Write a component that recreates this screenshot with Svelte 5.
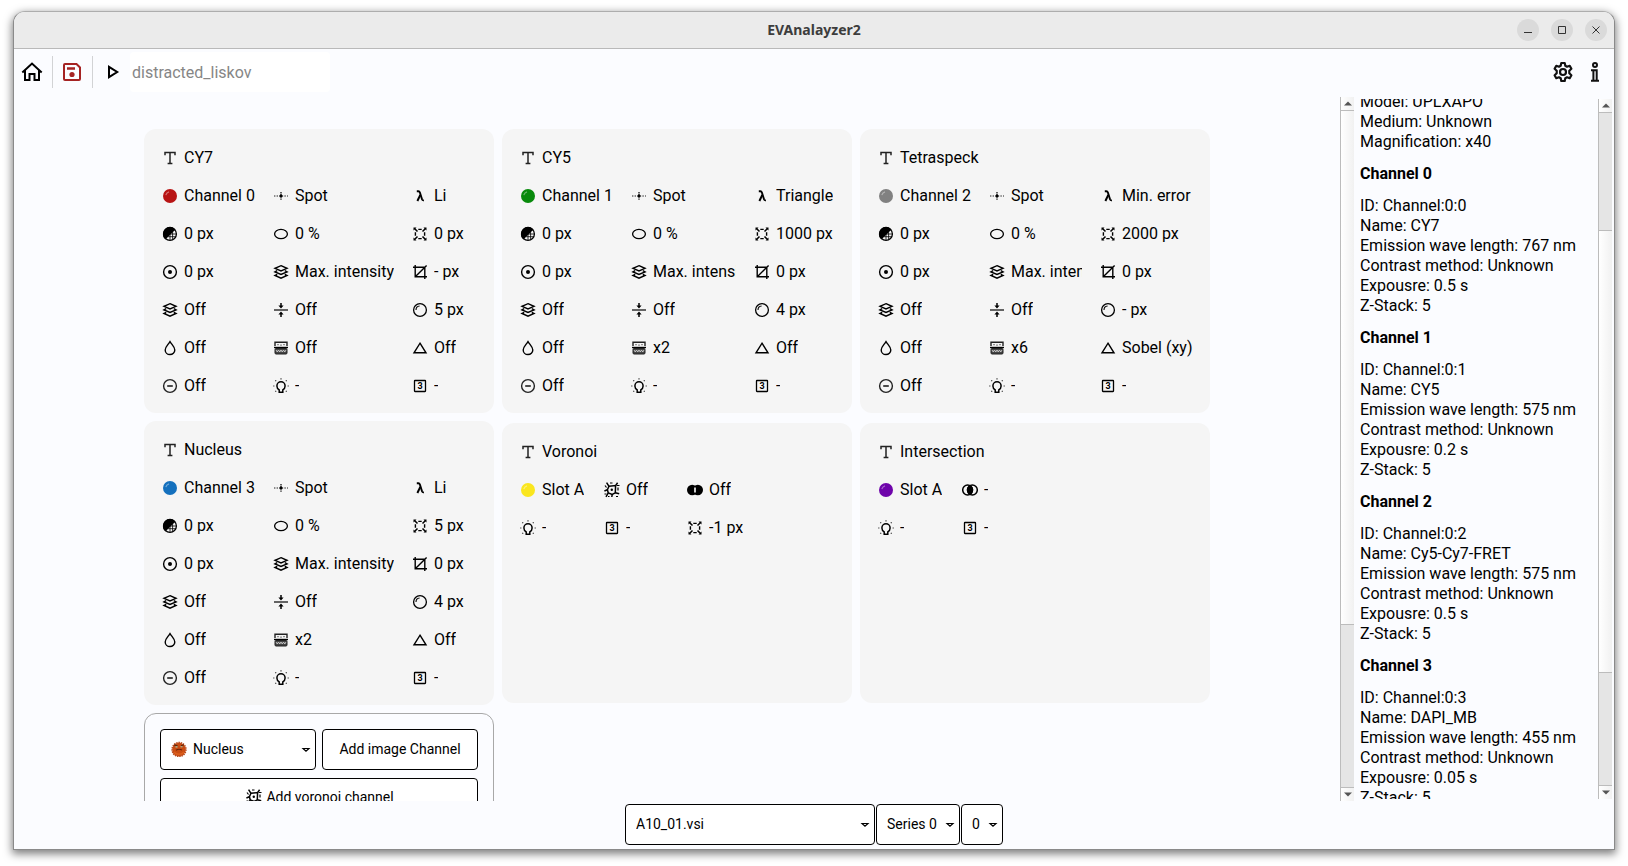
<script>
  let projectName = $state('distracted_liskov');

  const cell = (icon, text, color) => ({ icon, text, color });

  function imageChannel(title, color, channel, cols, v) {
    return {
      title,
      cols,
      tall: true,
      cells: [
        cell('ball', channel, color), cell('spot', 'Spot'), cell('lambda', v.threshold),
        cell('contrast', '0 px'), cell('ellipse', '0 %'), cell('size', v.size),
        cell('target', '0 px'), cell('layers', 'Max. intensity'), cell('crop', v.snap),
        cell('layers', 'Off'), cell('compress', 'Off'), cell('circle', v.rolling),
        cell('drop', 'Off'), cell('noise', v.median), cell('triangle', v.edge),
        cell('minus', 'Off'), cell('bulb', '-'), cell('three', '-')
      ]
    };
  }

  const cards = [
    imageChannel('CY7', '#b81414', 'Channel 0', '95px 123px 1fr', { threshold: 'Li', size: '0 px', snap: '- px', rolling: '5 px', median: 'Off', edge: 'Off' }),
    imageChannel('CY5', '#088a0c', 'Channel 1', '95px 107px 1fr', { threshold: 'Triangle', size: '1000 px', snap: '0 px', rolling: '4 px', median: 'x2', edge: 'Off' }),
    imageChannel('Tetraspeck', '#818181', 'Channel 2', '95px 95px 1fr', { threshold: 'Min. error', size: '2000 px', snap: '0 px', rolling: '- px', median: 'x6', edge: 'Sobel (xy)' }),
    imageChannel('Nucleus', '#1470bd', 'Channel 3', '95px 123px 1fr', { threshold: 'Li', size: '5 px', snap: '0 px', rolling: '4 px', median: 'x2', edge: 'Off' }),
    {
      title: 'Voronoi', cols: '68px 67px 1fr',
      cells: [
        cell('ball', 'Slot A', '#fae61e'), cell('voronoi', 'Off'), cell('mask', 'Off'),
        cell('bulb', '-'), cell('three', '-'), cell('size', '-1 px')
      ]
    },
    {
      title: 'Intersection', cols: '68px 67px 1fr',
      cells: [
        cell('ball', 'Slot A', '#6e04aa'), cell('intersect', '-'), null,
        cell('bulb', '-'), cell('three', '-')
      ]
    }
  ];

  const metadata = [
    { id: 0, name: 'CY7', wave: 767, exposure: '0.5' },
    { id: 1, name: 'CY5', wave: 575, exposure: '0.2' },
    { id: 2, name: 'Cy5-Cy7-FRET', wave: 575, exposure: '0.5' },
    { id: 3, name: 'DAPI_MB', wave: 455, exposure: '0.05' }
  ];
</script>

{#snippet icon(name, color)}
  <svg class="icon" viewBox="0 0 16 16" fill="none" stroke="#000" stroke-width="1.3" aria-hidden="true">
    {#if name === 'title'}
      <path d="M3 5.200V2.500h10v2.700M8 2.500v11M5.600 13.500h4.800" stroke="#222" stroke-width="1.500" />
    {:else if name === 'ball'}
      <circle cx="8" cy="8" r="7" fill={color} stroke="none" />
      <path d="M3.800 7.200A4.600 4.600 0 0 1 7 3.800" stroke="#fff" stroke-opacity=".4" stroke-width="1.200" />
    {:else if name === 'spot'}
      <path d="M1 8h14" stroke-dasharray="1.400 1.200" stroke="#222" stroke-width="1.200" />
      <path d="M8 4v8" stroke-dasharray="1.200 .6" stroke-width="1.200" />
      <circle cx="8" cy="8" r="1.500" fill="#000" stroke="none" />
    {:else if name === 'lambda'}
      <path d="M4.800 3.200h1.600c.9 0 1.200.4 1.500 1.300l2.200 7c.3.8.8 1 1.800.8" stroke-width="1.900" />
      <path d="M8.300 6.800 5.400 13" stroke-width="2" />
    {:else if name === 'contrast'}
      <circle cx="8" cy="8" r="6.400" />
      <path d="M3.400 12.600A6.400 6.400 0 0 1 12.600 3.400z" fill="#000" />
      <path d="M8 8v6M10.600 5.400v8M5.400 10.700h8M8 8h6.200" stroke-width=".8" />
    {:else if name === 'ellipse'}
      <ellipse cx="8" cy="8" rx="6.400" ry="4.700" />
    {:else if name === 'size'}
      <path d="M6.300 3.400h3.400M6.300 12.600h3.400M3.400 6.300v3.400M12.600 6.300v3.400" stroke-width="1.400" />
      <path d="M2.500 2.500l3 3M13.500 2.500l-3 3M2.500 13.500l3-3M13.500 13.500l-3-3" stroke-width="1.500" />
      <path d="M1.500 4.500v-3h3zM11.500 1.500h3v3zM1.500 11.500v3h3zM14.500 11.500v3h-3z" fill="#000" stroke="none" />
    {:else if name === 'target'}
      <circle cx="8" cy="8" r="6.400" stroke-width="1.400" />
      <circle cx="8" cy="8" r="2" fill="#000" stroke="none" />
    {:else if name === 'layers'}
      <path d="M8 1.700 14 4.300 8 6.900 2 4.300z" stroke-width="1.400" />
      <path d="M4.200 6.700 2 7.900l6 2.600 6-2.600-2.200-1.200M4.200 10.300 2 11.500l6 2.600 6-2.600-2.200-1.200" stroke-width="1.500" />
    {:else if name === 'crop'}
      <path d="M3.200 1v11.800H15M1 3.200h11.800V15M4 12 14.600 1.400" stroke-width="1.400" />
    {:else if name === 'compress'}
      <path d="M1 8h14" stroke="#333" stroke-width="1.500" />
      <path d="M8 1v3M8 15v-3" stroke-width="1.500" />
      <path d="M5.400 3.600h5.200L8 6.400zM5.400 12.400h5.200L8 9.600z" fill="#000" stroke="none" />
    {:else if name === 'circle'}
      <circle cx="8" cy="8" r="6.400" />
      <path d="M4 8a4 4 0 0 1 3.600-4" stroke-width="1.100" />
    {:else if name === 'drop'}
      <path d="M8 1.600C6.200 4.600 3.200 6.900 3.200 9.900a4.800 4.600 0 0 0 9.600 0C12.800 6.900 9.800 4.600 8 1.600z" stroke-width="1.400" />
    {:else if name === 'noise'}
      <path d="M2 6V2.200h12V6" stroke="#222" stroke-width="1.400" />
      <path d="M1 7.500h14" stroke-width="1.400" />
      <path d="M4.500 4.700h1M7.500 5.200h1M10.500 4.700h1" stroke="#333" />
      <rect x="2" y="8.500" width="12" height="5.500" rx="1" fill="#444" stroke="#222" stroke-width="1" />
      <path d="M3 10l1.250 2L5.500 10l1.250 2L8 10l1.250 2 1.250-2 1.250 2L13 10" stroke="#ddd" stroke-width=".8" />
    {:else if name === 'triangle'}
      <path d="M8 3.200 14 12.800H2z" stroke-width="1.400" />
    {:else if name === 'minus'}
      <circle cx="8" cy="8" r="6.400" stroke="#222" stroke-width="1.400" />
      <path d="M5.200 8h5.600" stroke-width="1.400" />
    {:else if name === 'bulb'}
      <path d="M6.200 14.200v-2.300C5 11.100 3.900 9.900 3.900 7.900a4.100 4.100 0 0 1 8.200 0c0 2-1.100 3.200-2.300 4v2.300z" stroke-width="1.500" />
      <path d="M8 .2v1.300M2.300 2.300l.9.9M13.700 2.300l-.9.900M.2 8h1.200M15.800 8h-1.200M2.300 13.700l.9-.9M13.700 13.700l-.9-.9" stroke="#333" stroke-width="1.200" />
    {:else if name === 'three'}
      <rect x="2.500" y="2.500" width="11" height="11" rx=".5" />
      <text x="8" y="11.300" text-anchor="middle" font-family="Roboto, sans-serif" font-weight="700" font-size="9" fill="#000" stroke="none">3</text>
    {:else if name === 'voronoi'}
      <path d="M5 4.300 11.600 3.600 11.300 10.800 8.200 12.500 4.300 10.900 3.400 7.800z" stroke-width="1.500" />
      <path d="M5 4.300 2.600.6M11.600 3.600 13.600.8M11.300 10.800l3.900 1M8.200 12.500 7.800 15M4.300 10.900l-2.300 4M3.400 7.800.4 9" stroke-width="1.500" />
      <path d="M6 1h2.500M1 3.500l1.500 2M13 3.500h2.500M14 5.500v3M12 14.500h2M.5 12h2M4 14.500h1.500" stroke-width="1.200" />
      <circle cx="7.800" cy="7.700" r="1.200" fill="#000" stroke="none" />
    {:else if name === 'mask'}
      <circle cx="5.200" cy="8" r="5.200" fill="#000" stroke="none" />
      <circle cx="10.800" cy="8" r="5.200" fill="#000" stroke="none" />
      <path d="M8 5.500v5" stroke="#fff" stroke-width="1.600" />
    {:else if name === 'intersect'}
      <circle cx="5.600" cy="8" r="4.900" stroke-width="1.500" />
      <circle cx="10.400" cy="8" r="4.900" stroke-width="1.500" />
      <path d="M8 3.700a4.900 4.900 0 0 1 0 8.600 4.900 4.900 0 0 1 0-8.600z" fill="#000" />
    {/if}
  </svg>
{/snippet}

{#snippet arrow()}
  <svg class="arrow" viewBox="0 0 10 8" aria-hidden="true">
    <path d="M2 2.500h6L5 5.300z" fill="none" stroke="#000" stroke-width="1.200" />
  </svg>
{/snippet}

{#snippet scrollbar(before, thumb, after)}
  <div class="scrollbar" aria-hidden="true">
    <div class="step"><svg viewBox="0 0 8 5"><path d="M0 4.500h8L4 .5z" fill="#555" /></svg></div>
    <div class="trough" style="flex-grow: {before}"></div>
    <div class="thumb" style="flex-grow: {thumb}"></div>
    <div class="trough" style="flex-grow: {after}"></div>
    <div class="step"><svg viewBox="0 0 8 5"><path d="M0 .5h8L4 4.500z" fill="#555" /></svg></div>
  </div>
{/snippet}

<div class="desktop">
  <div class="window">
    <header class="titlebar">
      <h1>EVAnalayzer2</h1>
      <div class="window-buttons">
        <button aria-label="Minimize"><svg viewBox="0 0 12 12"><path d="M2 8.500h8" /></svg></button>
        <button aria-label="Maximize"><svg viewBox="0 0 12 12"><path d="M2.500 2.500h7v7h-7z" /></svg></button>
        <button aria-label="Close"><svg viewBox="0 0 12 12"><path d="M2.500 2.500l7 7M9.500 2.500l-7 7" /></svg></button>
      </div>
    </header>

    <nav class="toolbar">
      <button class="tool" aria-label="Home">
        <svg viewBox="0 0 24 24" fill="none" stroke="#000" stroke-width="2"><path d="M2.300 12.400 12 3.600l9.700 8.800M5 10.500V20h4.500v-6h5v6H19v-9.500" /></svg>
      </button>
      <span class="divider"></span>
      <button class="tool" aria-label="Save">
        <svg viewBox="0 0 24 24" fill="none" stroke="#a52323" stroke-width="2"><path d="M5 4h11.500L20 7.500V19a1 1 0 0 1-1 1H5a1 1 0 0 1-1-1V5a1 1 0 0 1 1-1z" /><path d="M7 8.500h8" stroke-width="2.600" /><circle cx="12" cy="14.500" r="2.600" fill="#a52323" stroke="none" /></svg>
      </button>
      <span class="divider"></span>
      <button class="tool run" aria-label="Run">
        <svg viewBox="0 0 24 24" fill="none" stroke="#000" stroke-width="2"><path d="M8 6.800v10.400L16.200 12z" /></svg>
      </button>
      <input class="project" type="text" aria-label="Project name" bind:value={projectName} />
      <span class="spacer"></span>
      <button class="tool" aria-label="Settings">
        <svg viewBox="0 0 24 24" fill="none" stroke="#111" stroke-width="2.200" stroke-linejoin="round"><path d="M10.300 3h3.400l.6 2.700 1.700 1 2.700-.9 1.700 3-2.100 1.900v2.600l2.100 1.900-1.700 3-2.700-.9-1.700 1-.6 2.700h-3.400l-.6-2.700-1.700-1-2.700.9-1.700-3 2.100-1.900v-2.600L3.600 8.800l1.700-3 2.700.9 1.700-1z" /><circle cx="12" cy="12" r="3" /></svg>
      </button>
      <button class="tool" aria-label="Information">
        <svg viewBox="0 0 24 24" fill="none" stroke="#111" stroke-width="2"><circle cx="12" cy="5" r="2" /><path d="M8 10.300h5.700v10.200M8 20.800h8M10.400 10.500v10" stroke-width="2" /></svg>
      </button>
    </nav>

    <div class="body">
      <main>
        <div class="scroll">
          <div class="cards">
            {#each cards as card}
              <section class="card" class:short={!card.tall}>
                <h2>{@render icon('title')}<span>{card.title}</span></h2>
                <div class="values" style="grid-template-columns: {card.cols}">
                  {#each card.cells as c}
                    {#if c}
                      <div class="value">{@render icon(c.icon, c.color)}<span>{c.text}</span></div>
                    {:else}
                      <div></div>
                    {/if}
                  {/each}
                </div>
              </section>
            {/each}
            <form class="add" onsubmit={(e) => e.preventDefault()}>
              <div class="dropdown kind">
                <svg class="fuzzy" viewBox="0 0 16 16" aria-hidden="true">
                  <circle cx="8" cy="8.500" r="6.800" fill="#c94c12" />
                  <circle cx="8" cy="8.500" r="7" fill="none" stroke="#b8481a" stroke-width="1.400" stroke-dasharray="1.500 .8" />
                  <path d="M3 11a6 5 0 0 0 10 0" fill="none" stroke="#dd5f1c" stroke-width="1.500" />
                  <path d="M3 3.800l3.500 1M10 4.800l3-1" stroke="#5a250b" stroke-width="1.200" />
                  <ellipse cx="5.500" cy="5.900" rx="1.300" ry=".8" fill="#a9ab86" /><ellipse cx="10.500" cy="5.700" rx="1.300" ry=".8" fill="#a9ab86" />
                  <path d="M5 9.300c1.500-1.200 4-1.300 6-.2" fill="none" stroke="#6a2508" stroke-width="1.100" />
                </svg>
                <select aria-label="Channel type"><option>Nucleus</option></select>
                {@render arrow()}
              </div>
              <button>Add image Channel</button>
              <button class="wide">{@render icon('voronoi')}<span>Add voronoi channel</span></button>
            </form>
          </div>
        </div>
        {@render scrollbar(0, 514, 162)}
      </main>

      <aside>
        <div class="meta">
          <p>Model: UPLXAPO</p>
          <p>Medium: Unknown</p>
          <p>Magnification: x40</p>
          {#each metadata as m}
            <h3>Channel {m.id}</h3>
            <p>ID: Channel:0:{m.id}</p>
            <p>Name: {m.name}</p>
            <p>Emission wave length: {m.wave} nm</p>
            <p>Contrast method: Unknown</p>
            <p>Expousre: {m.exposure} s</p>
            <p>Z-Stack: 5</p>
          {/each}
        </div>
        {@render scrollbar(118, 443, 112)}
      </aside>
    </div>

    <footer>
      <div class="dropdown file">
        <select aria-label="Image file"><option>A10_01.vsi</option></select>
        {@render arrow()}
      </div>
      <div class="dropdown series">
        <select aria-label="Series"><option>Series 0</option></select>
        {@render arrow()}
      </div>
      <div class="dropdown plane">
        <select aria-label="Plane"><option>0</option></select>
        {@render arrow()}
      </div>
    </footer>
  </div>
</div>

<style>
  :global(body) {
    margin: 0;
    background: #fff;
  }
  .desktop {
    box-sizing: border-box;
    height: 100vh;
    padding: 11px 13px 16px;
    font: 16px/20px Roboto, sans-serif;
    color: #000;
  }
  .window {
    box-sizing: border-box;
    height: 100%;
    display: flex;
    flex-direction: column;
    border: 1px solid #8a8a8a;
    border-top-color: #adadad;
    border-radius: 12px 12px 0 0;
    background: #fbfcff;
    box-shadow: 0 3px 9px 1px rgba(0, 0, 0, 0.5);
    overflow: hidden;
  }
  .titlebar {
    display: grid;
    grid-template-columns: 1fr auto 1fr;
    align-items: center;
    height: 36px;
    border-bottom: 1px solid #b9b9b9;
    background: #ebebeb;
  }
  h1 {
    grid-column: 2;
    margin: 0;
    font: 700 14px/20px "Noto Sans", sans-serif;
    color: #3d3d3d;
  }
  .window-buttons {
    display: flex;
    justify-content: flex-end;
    gap: 12px;
    padding-right: 7px;
  }
  .window-buttons button {
    display: grid;
    place-items: center;
    width: 22px;
    height: 22px;
    padding: 0;
    border: 0;
    border-radius: 50%;
    background: #dadada;
  }
  .window-buttons svg {
    width: 12px;
    height: 12px;
    fill: none;
    stroke: #333;
    stroke-width: 1;
  }
  .toolbar {
    box-sizing: border-box;
    display: flex;
    align-items: center;
    height: 48px;
    padding: 0 3px 2px 2px;
    flex: none;
  }
  .tool {
    display: grid;
    place-items: center;
    width: 32px;
    height: 40px;
    padding: 0;
    border: 0;
    background: none;
  }
  .tool svg {
    width: 24px;
    height: 24px;
  }
  .run {
    width: 34px;
  }
  .divider {
    width: 1px;
    height: 32px;
    margin: 0 3px 0 4px;
    background: #d2d3d5;
  }
  .project {
    box-sizing: border-box;
    width: 200px;
    height: 40px;
    padding: 0 2px;
    border: 0;
    border-radius: 4px;
    background: #fff;
    font: inherit;
    color: #868686;
  }
  .spacer {
    flex: 1;
  }
  .body {
    display: flex;
    flex: 1;
    min-height: 0;
  }
  main {
    display: flex;
    flex: 1;
    min-width: 0;
  }
  .scroll {
    flex: 1;
    overflow: hidden;
  }
  .cards {
    display: grid;
    grid-template-columns: repeat(3, 350px);
    gap: 8px;
    align-items: center;
    justify-content: center;
    padding-top: 32px;
  }
  .card {
    box-sizing: border-box;
    min-height: 284px;
    padding: 10px 8px 8px 16px;
    border-radius: 12px;
    background: #f5f5f5;
  }
  .card.short {
    min-height: 280px;
  }
  h2,
  .value {
    display: flex;
    align-items: center;
    gap: 4px;
    height: 38px;
    margin: 0;
    font: inherit;
    white-space: nowrap;
  }
  .values {
    display: grid;
    column-gap: 16px;
  }
  .value {
    min-width: 0;
  }
  .value span {
    overflow: hidden;
  }
  .icon {
    flex: none;
    width: 16px;
    height: 16px;
    margin: 0 2px;
  }
  .add {
    box-sizing: border-box;
    display: grid;
    grid-template-columns: 1fr 1fr;
    gap: 8px 6px;
    padding: 15px;
    border: 1px solid #a8a8a8;
    border-radius: 12px;
  }
  .add button,
  select {
    box-sizing: border-box;
    height: 41px;
    border: 1px solid #000;
    border-radius: 4px;
    background: #fff;
    font: 14px/20px Roboto, sans-serif;
    color: #000;
  }
  .add button {
    display: flex;
    align-items: center;
    justify-content: center;
    gap: 2px;
    padding: 0 0 2px;
  }
  .add .wide {
    grid-column: 1 / -1;
    padding-bottom: 4px;
  }
  .dropdown {
    position: relative;
  }
  select {
    display: block;
    width: 100%;
    padding: 0 10px 2px;
    appearance: none;
  }
  .kind select {
    padding-left: 32px;
  }
  .arrow {
    position: absolute;
    right: 5px;
    top: 17px;
    width: 10px;
    height: 8px;
    pointer-events: none;
  }
  .fuzzy {
    position: absolute;
    left: 11px;
    top: 12px;
    width: 16px;
    height: 16px;
    pointer-events: none;
  }
  .scrollbar {
    box-sizing: border-box;
    display: flex;
    flex: none;
    flex-direction: column;
    width: 14px;
    border-left: 1px solid #bcbcbc;
    background: #e5e5e5;
  }
  .step {
    display: grid;
    place-items: center;
    height: 13px;
    background: linear-gradient(90deg, #fff, #f1f1f1);
  }
  .step svg {
    width: 8px;
    height: 5px;
  }
  .trough {
    flex: 0 1 0;
  }
  .thumb {
    flex: 1 1 0;
    border: solid #bcbcbc;
    border-width: 1px 0;
    background: linear-gradient(90deg, #fff, #f1f1f1);
  }
  .step:first-child {
    border-bottom: 1px solid #bcbcbc;
  }
  .step + .trough + .thumb {
    margin-top: -1px;
  }
  .trough + .step {
    border-top: 1px solid #bcbcbc;
  }
  aside {
    box-sizing: border-box;
    display: flex;
    width: 260px;
    padding: 2px 2px 2px 6px;
  }
  .meta {
    flex: 1;
    overflow: hidden;
  }
  .meta p {
    margin: 0;
  }
  .meta p:first-child {
    margin-top: -7px;
  }
  h3 {
    margin: 12px 0;
    font: 700 16px/20px Roboto, sans-serif;
  }
  footer {
    display: flex;
    justify-content: center;
    gap: 1px;
    padding: 3px 0 4px;
  }
  .file {
    width: 250px;
  }
  .series {
    width: 84px;
  }
  .plane {
    width: 42px;
  }
</style>
